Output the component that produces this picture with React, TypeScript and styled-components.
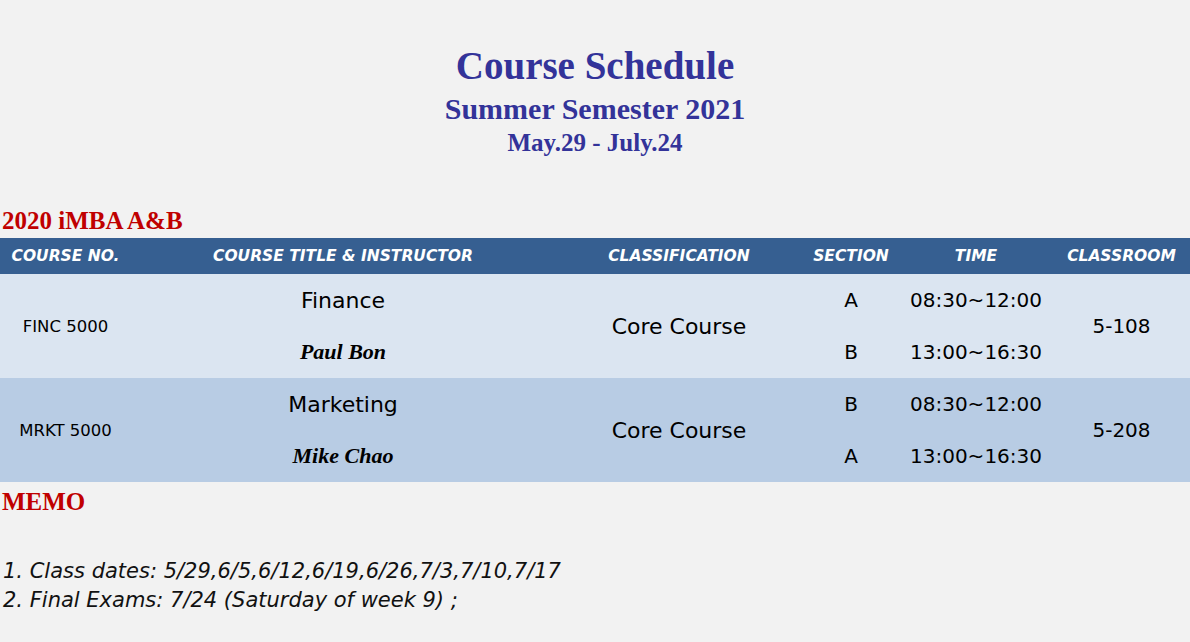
import React from "react";
import styled, { createGlobalStyle } from "styled-components";

const GlobalStyle = createGlobalStyle`
  html, body { margin: 0; padding: 0; background: #f2f2f2; }
  body { font-family: "DejaVu Sans", sans-serif; color: #000; }
`;

const Page = styled.div`
  width: 1190px;
  padding-top: 44px;
`;

const TitleBlock = styled.header`
  text-align: center;
  color: #333399;
  font-family: "Liberation Serif", "Times New Roman", serif;
  font-weight: bold;
`;

const TitleLine = styled.div<{ $size: number; $lh: number }>`
  font-size: ${(p) => p.$size}px;
  line-height: ${(p) => p.$lh}px;
`;

const SectionLabel = styled.h2<{ $mt: number }>`
  margin: ${(p) => p.$mt}px 0 2px 2px;
  font-family: "Liberation Serif", "Times New Roman", serif;
  font-weight: bold;
  font-size: 25px;
  line-height: 30px;
  color: #c00000;
`;

const Grid = styled.div`
  display: grid;
  grid-template-columns: 131px 424px 248px 96px 154px 137px;
  grid-template-rows: 36px repeat(4, 52px);
`;

const HeadCell = styled.div`
  background: #365f91;
  color: #fff;
  font-weight: bold;
  font-style: italic;
  font-size: 15.5px;
  display: flex;
  align-items: center;
  justify-content: center;
  white-space: nowrap;
`;

const Cell = styled.div<{ $span?: number; $shade: "light" | "dark"; $size: number; $serif?: boolean }>`
  grid-row: span ${(p) => p.$span ?? 1};
  background: ${(p) => (p.$shade === "light" ? "#dbe5f1" : "#b8cce4")};
  display: flex;
  align-items: center;
  justify-content: center;
  white-space: nowrap;
  font-size: ${(p) => p.$size}px;
  ${(p) =>
    p.$serif
      ? `font-family: "Liberation Serif", "Times New Roman", serif; font-weight: bold; font-style: italic;`
      : ""}
`;

const MemoList = styled.div`
  margin-top: 40px;
  padding-left: 3px;
  font-style: italic;
  font-size: 21px;
  line-height: 29px;
  color: #111;
`;

type Course = {
  no: string;
  title: string;
  instructor: string;
  classification: string;
  slots: { section: string; time: string }[];
  room: string;
};

const courses: Course[] = [
  {
    no: "FINC 5000",
    title: "Finance",
    instructor: "Paul Bon",
    classification: "Core Course",
    slots: [
      { section: "A", time: "08:30~12:00" },
      { section: "B", time: "13:00~16:30" },
    ],
    room: "5-108",
  },
  {
    no: "MRKT 5000",
    title: "Marketing",
    instructor: "Mike Chao",
    classification: "Core Course",
    slots: [
      { section: "B", time: "08:30~12:00" },
      { section: "A", time: "13:00~16:30" },
    ],
    room: "5-208",
  },
];

const headers = [
  "COURSE NO.",
  "COURSE TITLE & INSTRUCTOR",
  "CLASSIFICATION",
  "SECTION",
  "TIME",
  "CLASSROOM",
];

export default function App() {
  return (
    <Page>
      <GlobalStyle />
      <TitleBlock>
        <TitleLine $size={39} $lh={44}>Course Schedule</TitleLine>
        <TitleLine $size={30} $lh={42}>Summer Semester 2021</TitleLine>
        <TitleLine $size={25} $lh={25}>May.29 - July.24</TitleLine>
      </TitleBlock>
      <SectionLabel $mt={51}>2020 iMBA A&amp;B</SectionLabel>
      <Grid>
        {headers.map((h) => (
          <HeadCell key={h}>{h}</HeadCell>
        ))}
        {courses.map((c, i) => {
          const shade = i % 2 === 0 ? "light" : "dark";
          return (
            <React.Fragment key={c.no}>
              <Cell $span={2} $shade={shade} $size={16.5}>{c.no}</Cell>
              <Cell $shade={shade} $size={22}>{c.title}</Cell>
              <Cell $span={2} $shade={shade} $size={22}>{c.classification}</Cell>
              <Cell $shade={shade} $size={20}>{c.slots[0].section}</Cell>
              <Cell $shade={shade} $size={20}>{c.slots[0].time}</Cell>
              <Cell $span={2} $shade={shade} $size={20}>{c.room}</Cell>
              <Cell $shade={shade} $size={22} $serif>{c.instructor}</Cell>
              <Cell $shade={shade} $size={20}>{c.slots[1].section}</Cell>
              <Cell $shade={shade} $size={20}>{c.slots[1].time}</Cell>
            </React.Fragment>
          );
        })}
      </Grid>
      <SectionLabel $mt={5}>MEMO</SectionLabel>
      <MemoList>
        <div>1. Class dates: 5/29,6/5,6/12,6/19,6/26,7/3,7/10,7/17</div>
        <div>2. Final Exams: 7/24 (Saturday of week 9) ;</div>
      </MemoList>
    </Page>
  );
}
